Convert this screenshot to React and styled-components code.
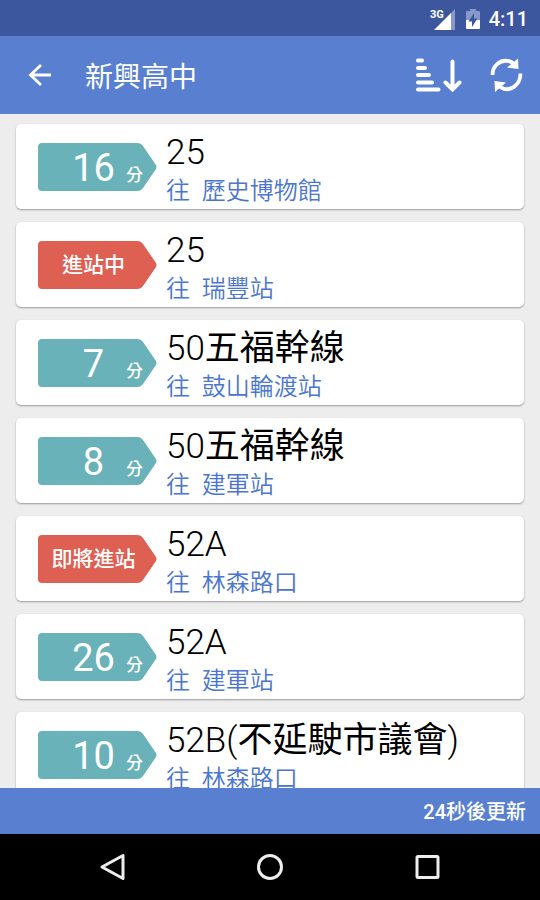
import styled, { createGlobalStyle } from "styled-components";

const GlobalStyle = createGlobalStyle`
  * {
    box-sizing: border-box;
  }
  body {
    margin: 0;
    background: #ededed;
    font-family: Roboto, "Noto Sans CJK TC", sans-serif;
  }
`;

const Screen = styled.div`
  display: flex;
  flex-direction: column;
  height: 100vh;
`;
const StatusBar = styled.div`
  display: flex;
  align-items: center;
  justify-content: flex-end;
  height: 36px;
  flex-shrink: 0;
  padding: 2px 12px 0;
  gap: 8px;
  background: #3d579f;
  color: #fff;
`;
const Clock = styled.time`
  font-size: 20px;
  font-weight: 500;
  line-height: 34px;
`;
const Toolbar = styled.header`
  display: flex;
  align-items: center;
  height: 78px;
  flex-shrink: 0;
  padding: 0 15px 0 22px;
  background: #587fd0;
  color: #fff;
`;
const Title = styled.h1`
  flex: 1;
  margin: 0 0 0 27px;
  padding-top: 6px;
  font-size: 28px;
  line-height: 36px;
  font-weight: 400;
`;
const Actions = styled.div`
  display: flex;
  gap: 27px;
`;
const IconButton = styled.button`
  display: flex;
  align-items: center;
  justify-content: center;
  padding: 0;
  border: 0;
  background: transparent;
  color: ${(props) => props.$color || "#fff"};
  cursor: pointer;
`;
const List = styled.ul`
  display: flex;
  flex-direction: column;
  flex: 1;
  min-height: 0;
  gap: 13px;
  margin: 0;
  padding: 10px 16px;
  list-style: none;
  overflow-y: auto;
  scrollbar-width: none;
`;
const Card = styled.li`
  display: flex;
  align-items: center;
  flex-shrink: 0;
  gap: 9px;
  height: 85px;
  padding: 0 22px;
  border-radius: 5px;
  background: #fff;
  box-shadow: 0 1px 2px rgba(0, 0, 0, 0.35);
`;
const Tag = styled.div`
  position: relative;
  display: grid;
  grid-template-columns: 1fr auto 1fr;
  align-items: baseline;
  width: 119px;
  height: 48px;
  flex-shrink: 0;
  padding: 0 14px 0 6px;
  line-height: 48px;
  color: #fff;
`;
const TagShape = styled.svg`
  position: absolute;
  inset: 0;
  fill: ${(props) => props.$color};
`;
const TagText = styled.span`
  position: relative;
  grid-column: 2;
  font-size: ${(props) => (props.$big ? "38px" : "21px")};
  font-weight: ${(props) => (props.$big ? 400 : 500)};
  line-height: ${(props) => (props.$big ? "50px" : "48px")};
`;
const Unit = styled.span`
  position: relative;
  justify-self: end;
  font-size: 17px;
  font-weight: 500;
`;
const Info = styled.div`
  min-width: 0;
  padding-top: 10px;
`;
const Route = styled.h2`
  margin: 0;
  font-size: 35px;
  font-weight: 300;
  line-height: 38px;
  color: #000;
  white-space: nowrap;
`;
const Wide = styled.span`
  font-weight: 400;
`;
const Destination = styled.p`
  margin: 0;
  font-size: 24px;
  line-height: 38px;
  font-weight: 350;
  color: #4a76cf;
  white-space: pre;
`;
const Footer = styled.footer`
  height: 46px;
  flex-shrink: 0;
  padding: 0 14px;
  background: #587fd0;
  color: #fff;
  font-size: 20px;
  font-weight: 500;
  line-height: 48px;
  text-align: right;
`;
const NavBar = styled.nav`
  display: flex;
  align-items: center;
  justify-content: center;
  gap: 117px;
  height: 66px;
  flex-shrink: 0;
  background: #000;
`;

const arrivals = [
  { minutes: 16, route: "25", to: "歷史博物館" },
  { status: "進站中", route: "25", to: "瑞豐站" },
  { minutes: 7, route: "50", name: "五福幹線", to: "鼓山輪渡站" },
  { minutes: 8, route: "50", name: "五福幹線", to: "建軍站" },
  { status: "即將進站", route: "52A", to: "林森路口" },
  { minutes: 26, route: "52A", to: "建軍站" },
  { minutes: 10, route: "52B(", name: "不延駛市議會", end: ")", to: "林森路口" },
];

function SignalIcon() {
  return (
    <svg width="28" height="24" viewBox="0 0 28 24" aria-hidden="true">
      <path d="M26 2v21H22V6z" fill="#8799c6" />
      <path d="M22 6v17H5z" fill="#fff" />
      <text x="1" y="11" fontSize="11" fontWeight="700" fill="#fff" stroke="#3d579f" strokeWidth="2" paintOrder="stroke">
        3G
      </text>
    </svg>
  );
}

function BatteryIcon() {
  return (
    <svg width="16" height="22" viewBox="0 0 16 22" aria-hidden="true">
      <path d="M5 1h6v2h3q1 0 1 1v8H1V4q0-1 1-1h3z" fill="#8799c6" />
      <path d="M1 12h14v8q0 1-1 1H2q-1 0-1-1z" fill="#fff" />
      <path d="M9 5 3.500 13.500H7V19l5.500-8.500H9z" fill="#3d579f" />
    </svg>
  );
}

function BackIcon() {
  return (
    <svg width="36" height="36" viewBox="0 0 36 36" fill="none" stroke="currentColor" strokeWidth="2.800">
      <path d="M29 18H8.500M19 8 8.500 18 19 28" />
    </svg>
  );
}

function SortIcon() {
  return (
    <svg width="48" height="40" viewBox="0 0 48 40" fill="none" stroke="currentColor" strokeLinecap="round" strokeWidth="4">
      <path d="M4 5.500h4M4 13h7M4 20h11M4 27.500h14M4 34.500h20.500" />
      <path d="M38.500 6.500v27M31.500 27.500l7 7 7-7" />
    </svg>
  );
}

function RefreshIcon() {
  return (
    <svg width="36" height="40" viewBox="0 0 36 40" fill="none" stroke="currentColor" strokeWidth="3.800">
      <path d="M3.500 20C3.500 10.500 11.500 4 20 6.200q3 .8 5 3" />
      <path d="M31.500 18.500C31.500 28.500 23.500 36 15 33.800q-3-.8-5-3" />
      <path d="M29 3.500 29.500 14 18 12.500z" fill="currentColor" stroke="none" />
      <path d="M6 37 5.500 26 17 27.500z" fill="currentColor" stroke="none" />
    </svg>
  );
}

function ArrivalTag(props) {
  const { minutes, status } = props;
  return (
    <Tag>
      <TagShape $color={status ? "#dd6053" : "#69b2b9"} width="119" height="48" viewBox="0 0 119 48" aria-hidden="true">
        <path d="M4 0H99q4 0 6 3l13 19q1 2 0 4l-13 19q-2 3-6 3H4q-4 0-4-4V4q0-4 4-4z" />
      </TagShape>
      <TagText $big={!status}>{status || minutes}</TagText>
      {!status && <Unit>分</Unit>}
    </Tag>
  );
}

export default function App() {
  return (
    <Screen lang="zh-Hant">
      <GlobalStyle />
      <StatusBar>
        <SignalIcon />
        <BatteryIcon />
        <Clock>4:11</Clock>
      </StatusBar>
      <Toolbar>
        <IconButton aria-label="返回">
          <BackIcon />
        </IconButton>
        <Title>新興高中</Title>
        <Actions>
          <IconButton aria-label="排序">
            <SortIcon />
          </IconButton>
          <IconButton aria-label="重新整理">
            <RefreshIcon />
          </IconButton>
        </Actions>
      </Toolbar>
      <List>
        {arrivals.map((item, index) => (
          <Card key={index}>
            <ArrivalTag minutes={item.minutes} status={item.status} />
            <Info>
              <Route>
                {item.route}
                {item.name && <Wide>{item.name}</Wide>}
                {item.end}
              </Route>
              <Destination>{"往  " + item.to}</Destination>
            </Info>
          </Card>
        ))}
      </List>
      <Footer>24秒後更新</Footer>
      <NavBar>
        <IconButton $color="#eee" aria-label="上一頁">
          <svg width="40" height="40" viewBox="0 0 40 40" fill="none" stroke="currentColor" strokeWidth="3" strokeLinejoin="round">
            <path d="M30 8.500v23L9 20z" />
          </svg>
        </IconButton>
        <IconButton $color="#eee" aria-label="主畫面">
          <svg width="40" height="40" viewBox="0 0 40 40" fill="none" stroke="currentColor" strokeWidth="3">
            <circle cx="20" cy="20" r="11.500" />
          </svg>
        </IconButton>
        <IconButton $color="#eee" aria-label="最近使用">
          <svg width="40" height="40" viewBox="0 0 40 40" fill="none" stroke="currentColor" strokeWidth="3">
            <rect x="10" y="9.500" width="21" height="21" rx="1" />
          </svg>
        </IconButton>
      </NavBar>
    </Screen>
  );
}
